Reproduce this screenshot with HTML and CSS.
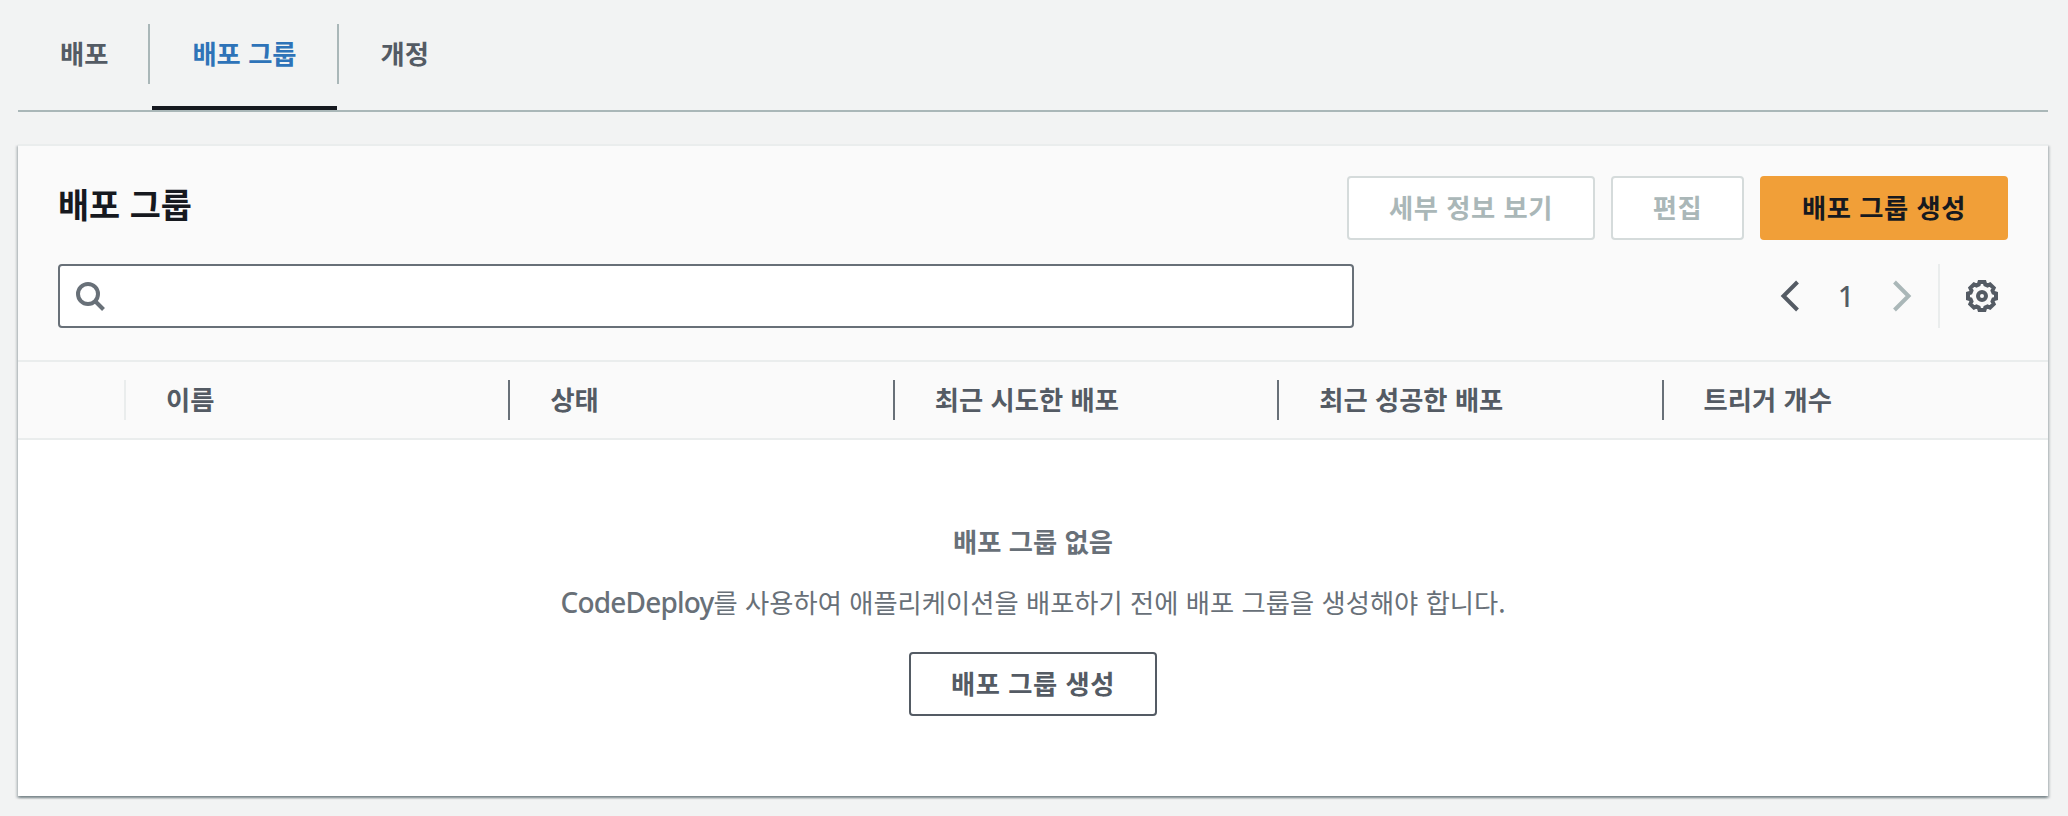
FILE: index.html
```html
<!DOCTYPE html>
<html lang="ko">
<head>
<meta charset="utf-8">
<title>배포 그룹</title>
<link rel="stylesheet" href="styles.css">
</head>
<body>
<nav class="tabs">
  <a class="tab">배포</a>
  <a class="tab tab-active">배포 그룹</a>
  <a class="tab">개정</a>
</nav>
<main class="card">
  <header class="card-header">
    <div class="title-row">
      <h2 class="title">배포 그룹</h2>
      <div class="actions">
        <button class="btn btn-disabled">세부 정보 보기</button>
        <button class="btn btn-small btn-disabled">편집</button>
        <button class="btn btn-primary">배포 그룹 생성</button>
      </div>
    </div>
    <div class="tools-row">
      <div class="search">
        <svg class="search-icon" width="32" height="32" viewBox="0 0 32 32"><circle cx="14" cy="14" r="10" /><path d="M21 21l8.500 8.500" /></svg>
      </div>
      <div class="pagination">
        <svg class="chevron" width="20" height="32" viewBox="0 0 20 32"><path d="M17.500 2L3.500 16l14 14" /></svg>
        <span class="page">1</span>
        <svg class="chevron chevron-off" width="20" height="32" viewBox="0 0 20 32"><path d="M2.500 2l14 14-14 14" /></svg>
        <span class="divider"></span>
        <svg class="gear" width="32" height="32" viewBox="0 0 32 32"><path d="M13.500 2h5l.8 2.600 2.200.9 2.500-1.200 3.700 3.700-1.200 2.500.9 2.200 2.600.8v5l-2.600.8-.9 2.200 1.200 2.500-3.700 3.700-2.500-1.200-2.200.9-.8 2.600h-5l-.8-2.600-2.200-.9L8 27.700 4.300 24l1.200-2.500-.9-2.200L2 18.500v-5l2.600-.8.9-2.200L4.300 8 8 4.300l2.500 1.200 2.200-.9z" /><circle cx="16" cy="16" r="4" /></svg>
      </div>
    </div>
  </header>
  <div class="columns">
    <div class="col"></div>
    <div class="col">이름</div>
    <div class="col">상태</div>
    <div class="col">최근 시도한 배포</div>
    <div class="col">최근 성공한 배포</div>
    <div class="col">트리거 개수</div>
  </div>
  <section class="empty">
    <strong class="empty-title">배포 그룹 없음</strong>
    <p class="empty-text"><span class="latin">CodeDeploy</span>를 사용하여 애플리케이션을 배포하기 전에 배포 그룹을 생성해야 합니다.</p>
    <button class="btn">배포 그룹 생성</button>
  </section>
</main>
</body>
</html>
```
FILE: styles.css
```css
* { box-sizing: border-box; }
body {
  margin: 0;
  height: 816px;
  padding: 0 20px 0 18px;
  background: #f2f3f3;
  color: #545b64;
  font: 26.3px/40px "Noto Sans CJK KR", sans-serif;
  overflow: hidden;
}
.tabs {
  display: flex;
  height: 112px;
  padding: 24px 0 0 2px;
  border-bottom: 2px solid #aab7b8;
  font-weight: 700;
}
.tab {
  position: relative;
  height: 86px;
  padding: 9px 40px 0;
  margin-right: 4px;
}
.tab:not(:last-child)::after {
  content: "";
  position: absolute;
  right: -2px;
  top: 0;
  width: 2px;
  height: 60px;
  background: #aab7b8;
}
.tab-active {
  color: #2e73b8;
  border-bottom: 4px solid #16191f;
}
.card {
  margin-top: 32px;
  height: 652px;
  background: #fff;
  border-top: 2px solid #eaeded;
  box-shadow: 0 2px 2px rgba(0, 28, 36, .3), 2px 2px 2px rgba(0, 28, 36, .15), -2px 2px 2px rgba(0, 28, 36, .15);
}
.card-header {
  height: 216px;
  padding: 30px 40px 0;
  background: #fafafa;
  border-bottom: 2px solid #eaeded;
}
.title-row, .tools-row { display: flex; justify-content: space-between; }
.title {
  margin: 6px 0 0;
  color: #16191f;
  font-size: 33.8px;
  line-height: 44px;
}
.actions { display: flex; gap: 16px; }
.btn {
  width: 248px;
  height: 64px;
  padding: 0 0 2px;
  border: 2px solid #545b64;
  border-radius: 4px;
  background: #fff;
  color: #545b64;
  font: inherit;
  font-weight: 700;
  letter-spacing: .5px;
  line-height: 40px;
  white-space: nowrap;
}
.btn-small { width: 133px; }
.btn-disabled { color: #aab7b8; border-color: #d5dbdb; }
.btn-primary { color: #16191f; background: #f19f38; border-color: #f19f38; }
.tools-row { margin-top: 24px; }
.search {
  width: 1296px;
  height: 64px;
  padding: 14px;
  border: 2px solid #687078;
  border-radius: 4px;
  background: #fff;
}
.search-icon { display: block; fill: none; stroke: #687078; stroke-width: 4; }
.pagination { display: flex; align-items: center; height: 64px; padding-right: 10px; }
.chevron { fill: none; stroke: #545b64; stroke-width: 4; }
.chevron-off { stroke: #aab7b8; }
.page { width: 92px; text-align: center; font: 500 28px/40px "Noto Sans", sans-serif; }
.divider { width: 2px; height: 64px; margin: 0 26px; background: #eaeded; }
.gear { fill: none; stroke: #545b64; stroke-width: 4; }
.columns {
  display: grid;
  grid-template-columns: 108px repeat(5, 1fr);
  height: 78px;
  padding: 18px 0;
  background: #fafafa;
  border-bottom: 2px solid #eaeded;
  font-weight: 700;
}
.col { height: 40px; padding-left: 40px; border-right: 2px solid #687078; line-height: 38px; }
.col:first-child { border-color: #eaeded; }
.col:last-child { border: 0; }
.empty { display: flex; flex-direction: column; align-items: center; padding-top: 81px; color: #687078; }
.empty-text { margin: 21px 0 30px; white-space: nowrap; }
.latin { font-family: "Noto Sans", sans-serif; font-size: 28px; font-weight: 500; letter-spacing: -.8px; line-height: 1; }
```
